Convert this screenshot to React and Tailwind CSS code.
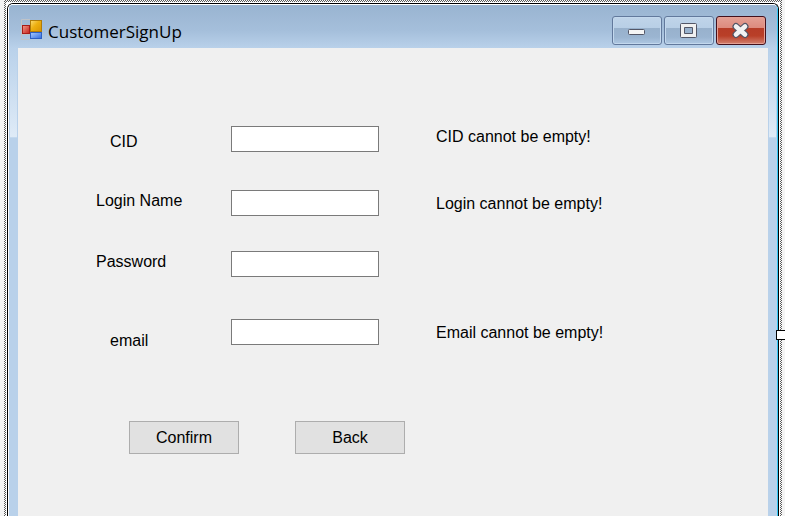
import React from "react";

const fields = [
  { id: "cid", label: "CID", message: "CID cannot be empty!", row: "h-8", labelPos: "self-end pl-3.5", inputPos: "self-center", messagePos: "self-start" },
  { id: "login", label: "Login Name", message: "Login cannot be empty!", row: "mt-[33px] h-[30px]", labelPos: "self-start", inputPos: "self-center", messagePos: "self-end" },
  { id: "password", label: "Password", type: "password", row: "mt-[31px] h-7", labelPos: "self-start", inputPos: "self-end" },
  { id: "email", label: "email", message: "Email cannot be empty!", row: "mt-[42px] h-[35px]", labelPos: "self-end pl-3.5", inputPos: "self-start", messagePos: "self-start" },
];

function AppIcon() {
  return (
    <svg width="22" height="22" viewBox="0 0 22 22" aria-hidden="true">
      <defs>
        <linearGradient id="gold" x1="0" y1="0" x2="1" y2="1">
          <stop offset="0" stopColor="#fbdc72" />
          <stop offset="0.45" stopColor="#edb010" />
          <stop offset="1" stopColor="#d89200" />
        </linearGradient>
        <linearGradient id="red" x1="0" y1="0" x2="1" y2="1">
          <stop offset="0" stopColor="#f29a8c" />
          <stop offset="1" stopColor="#c51f18" />
        </linearGradient>
        <linearGradient id="blue" x1="0" y1="0" x2="1" y2="1">
          <stop offset="0" stopColor="#a9cbff" />
          <stop offset="1" stopColor="#2f6be0" />
        </linearGradient>
      </defs>
      <path d="M9 .5H.5v20H9M.5 15.500H9" fill="none" stroke="#bfc3c8" />
      <rect x="9.500" y="1.500" width="11" height="11" fill="url(#gold)" stroke="#b07c08" />
      <rect x="1.500" y="6.500" width="7" height="8" fill="url(#red)" stroke="#a81c18" />
      <rect x="9.500" y="13.500" width="11" height="6" fill="url(#blue)" stroke="#2c5fc4" />
    </svg>
  );
}

const glyphs = {
  Minimize: <rect x="3.500" y="8.500" width="16" height="5" rx="1" fill="#f5f5f5" stroke="#535666" />,
  Maximize: (
    <path d="M4.500 2.500h14q1 0 1 1v12q0 1-1 1h-14q-1 0-1-1v-12q0-1 1-1zM7.500 6.500v6h8v-6z" fill="#f0f0f0" fillRule="evenodd" stroke="#535666" />
  ),
  Close: (
    <g fill="none" strokeLinecap="round">
      <path d="M7 5.500l9 8M16 5.500l-9 8" stroke="#535666" strokeWidth="7" />
      <path d="M7 5.500l9 8M16 5.500l-9 8" stroke="#f2f2f2" strokeWidth="4.600" />
    </g>
  ),
};

function CaptionButton({ name }) {
  const colors =
    name === "Close"
      ? "border-[#43101c] bg-[linear-gradient(#e3a095,#dd8a7d_41%,#b63c27_42%,#b93f28_70%,#d2806f)] shadow-[inset_0_0_0_1px_#e5a094]"
      : "border-[#62799c] bg-[linear-gradient(#c0d4e9,#b8cfe6_41%,#98b1cc_42%,#9bb5d1_75%,#afc8e2)] shadow-[inset_0_0_0_1px_#c3d8ed]";
  return (
    <button type="button" aria-label={name} className={`flex h-[29px] w-[50px] items-center justify-center rounded-[3px] border ${colors}`}>
      <svg width="22" height="19" viewBox="1 0 22 19" aria-hidden="true">{glyphs[name]}</svg>
    </button>
  );
}

function SideBorder() {
  return (
    <div className="w-[9px] shrink-0 bg-[#b9d1ea] px-px">
      <div className="h-[90px] border-b border-[#c4d9ee] bg-[linear-gradient(#b9d1ea,#dfebf7)]" />
    </div>
  );
}

function SignUpForm() {
  return (
    <form className="min-w-0 flex-1 bg-[#f0f0f0] pt-[75px] pl-[78px]">
      {fields.map((f) => (
        <div key={f.id} className={`grid grid-cols-[135px_205px_1fr] ${f.row}`}>
          <label htmlFor={f.id} className={`leading-[26px] ${f.labelPos}`}>{f.label}</label>
          <input
            id={f.id}
            type={f.type || "text"}
            className={`h-[26px] w-[148px] border border-[#7a7a7a] bg-white px-1 outline-none ${f.inputPos}`}
          />
          {f.message && <p className={`leading-7 ${f.messagePos}`}>{f.message}</p>}
        </div>
      ))}
      <div className="mt-[67px] flex gap-14 pl-[33px]">
        {["Confirm", "Back"].map((name) => (
          <button key={name} type="button" className="h-[33px] w-[110px] border border-[#adadad] bg-[#e1e1e1]">
            {name}
          </button>
        ))}
      </div>
    </form>
  );
}

export default function App() {
  return (
    <div className="relative h-screen overflow-hidden bg-[#f4f4f4] pr-[3px] pl-1 font-['Liberation_Sans',Arial,sans-serif] text-base text-black">
      <div className="h-full bg-[conic-gradient(#5c5c5c_25%,#fafafa_0_50%,#5c5c5c_0_75%,#fafafa_0)] bg-[length:2px_2px] px-0.5 pt-0.5">
        <div className="h-full bg-white px-px pt-px">
          <div className="h-full overflow-hidden rounded-t-[6px] border-x border-t border-black">
            <div className="flex h-full flex-col overflow-hidden rounded-t-[5px] border-x border-t border-t-white border-r-[#35c8f5] border-l-white bg-[#b9d1ea]">
              <header className="flex h-[43px] shrink-0 items-start bg-[linear-gradient(#99b4d1,#a5bfdb_60%,#b9d1ea)] pt-[11px] pr-[11px] pl-3">
                <div className="flex flex-1 items-start gap-[5px] pt-[3px]">
                  <AppIcon />
                  <h1 className="font-['Open_Sans','Noto_Sans',sans-serif] text-[17px] leading-[26px]">CustomerSignUp</h1>
                </div>
                <div className="flex gap-0.5">
                  <CaptionButton name="Minimize" />
                  <CaptionButton name="Maximize" />
                  <CaptionButton name="Close" />
                </div>
              </header>
              <div className="flex min-h-0 flex-1">
                <SideBorder />
                <SignUpForm />
                <SideBorder />
              </div>
            </div>
          </div>
        </div>
      </div>
      <div className="absolute top-[330px] right-0 h-[10px] w-[9px] rounded-l-[1px] border-y border-l border-black bg-white" />
    </div>
  );
}
